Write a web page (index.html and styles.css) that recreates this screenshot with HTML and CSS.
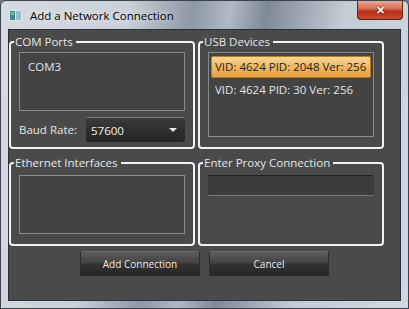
FILE: index.html
```html
<!DOCTYPE html>
<html lang="en">
<head>
  <meta charset="UTF-8" />
  <title>Add a Network Connection</title>
  <link rel="stylesheet" href="styles.css">
</head>
<body>

<div class="window">
  <!-- Title bar -->
  <div class="titlebar">
    <svg class="app-icon" width="13" height="11" viewBox="0 0 13 11">
      <rect x="0" y="0" width="13" height="11" fill="#dfe6ea"/>
      <rect x="1" y="1" width="5" height="9" fill="#3d8a8c"/>
      <rect x="7" y="1" width="5" height="9" fill="#9fb8c8"/>
      <rect x="2" y="2" width="3" height="3" fill="#6cc0b0"/>
    </svg>
    <span class="title">Add a Network Connection</span>
    <button class="close-btn">✕</button>
  </div>

  <!-- Client area -->
  <div class="client">
    <div class="groups">
      <fieldset class="group">
        <legend>COM Ports</legend>
        <ul class="listbox com-list">
          <li>COM3</li>
        </ul>
        <div class="baud-row">
          <label>Baud Rate:</label>
          <div class="combo">
            <span>57600</span>
            <span class="arrow"></span>
          </div>
        </div>
      </fieldset>

      <fieldset class="group">
        <legend>USB Devices</legend>
        <ul class="listbox usb-list">
          <li class="selected">VID: 4624 PID: 2048 Ver: 256</li>
          <li>VID: 4624 PID: 30 Ver: 256</li>
        </ul>
      </fieldset>

      <fieldset class="group">
        <legend>Ethernet Interfaces</legend>
        <ul class="listbox eth-list"></ul>
      </fieldset>

      <fieldset class="group">
        <legend>Enter Proxy Connection</legend>
        <input class="proxy-input" type="text" />
      </fieldset>
    </div>

    <div class="buttons">
      <button class="btn">Add Connection</button>
      <button class="btn">Cancel</button>
    </div>
  </div>
</div>

</body>
</html>
```

FILE: styles.css
```css
* { margin: 0; padding: 0; box-sizing: border-box; }

body {
  font-family: 'Open Sans', sans-serif;
  background: #6f7c88;
  width: 409px;
  height: 309px;
  overflow: hidden;
}

.window {
  width: 409px;
  height: 309px;
  border: 1px solid #3a4450;
  border-radius: 6px 6px 0 0;
  background: linear-gradient(100deg, #d6dbe0 0%, #c9d0d7 28%, #8c98a4 42%, #b0bac4 50%, #7e8a96 58%, #c4ccd4 75%, #d2d8de 100%);
  padding: 0 7px 7px 7px;
  display: flex;
  flex-direction: column;
}

/* Title bar */
.titlebar {
  height: 28px;
  display: flex;
  align-items: center;
  position: relative;
}

.app-icon {
  margin: 1px 0 0 1px;
}

.title {
  margin: 0 0 0 8px;
  font-size: 11.5px;
  color: #000;
  text-shadow: 0 0 6px rgba(255,255,255,0.9);
}

.close-btn {
  position: absolute;
  top: 0;
  right: -2px;
  width: 46px;
  height: 19px;
  border: 1px solid #5a2418;
  border-top: none;
  border-radius: 0 0 4px 4px;
  background: linear-gradient(#e8a896 0%, #d46a50 45%, #b8301c 55%, #c84a30 100%);
  color: #fff;
  font-size: 11px;
  font-weight: 700;
  text-shadow: 0 0 2px #400;
}

/* Client */
.client {
  flex: 1;
  background: #4a4a4a;
  border: 1px solid #26323e;
  padding: 5px 15px 0 0;
  display: flex;
  flex-direction: column;
}

.groups {
  display: grid;
  grid-template-columns: 186px 186px;
  grid-template-rows: 114px 90px;
  gap: 7px 3px;
}

.group {
  border: 2px solid #f2f2f2;
  border-radius: 4px;
  padding: 0 8px 8px 8px;
  min-width: 0;
}

.group legend {
  margin-left: -5px;
  padding: 0 3px 0 1px;
  font-size: 11.5px;
  line-height: 14px;
  color: #e6e6e6;
}

.listbox {
  list-style: none;
  background: #434343;
  border: 1px solid #8a8a8a;
  margin-top: 3px;
  padding: 3px 2px;
}

.com-list { height: 59px; }
.usb-list { height: 85px; }
.eth-list { height: 59px; margin-top: 5px; }

.listbox li {
  font-size: 11.5px;
  line-height: 18px;
  color: #e4e4e4;
  padding: 1px 5px;
  border: 1px solid transparent;
}

.usb-list li {
  padding: 1px 3px;
  margin-bottom: 1px;
}

.usb-list li.selected {
  background: linear-gradient(#f9d596 0%, #f0b862 50%, #e6a040 100%);
  border: 1px solid #b47c2c;
  border-radius: 2px;
  color: #1e1e1e;
}

.baud-row {
  display: flex;
  align-items: center;
  margin-top: 6px;
}

.baud-row label {
  font-size: 11.5px;
  color: #e4e4e4;
  width: 67px;
}

.combo {
  flex: 1;
  height: 25px;
  display: flex;
  align-items: center;
  justify-content: space-between;
  padding: 0 8px 0 5px;
  background: linear-gradient(#3a3a3a 0%, #2c2c2c 60%, #262626 100%);
  border-top: 1px solid #7a7a7a;
  border-radius: 2px;
  font-size: 11.5px;
  color: #f0f0f0;
}

.arrow {
  width: 0;
  height: 0;
  border-left: 4px solid transparent;
  border-right: 4px solid transparent;
  border-top: 4px solid #e8e8e8;
}

.proxy-input {
  display: block;
  width: 100%;
  height: 21px;
  margin-top: 5px;
  background: #3c3c3c;
  border: none;
  border-top: 1px solid #1e1e1e;
  border-bottom: 1px solid #7a7a7a;
  border-radius: 2px;
  outline: none;
}

/* Buttons */
.buttons {
  display: flex;
  justify-content: center;
  gap: 9px;
  margin-top: 5px;
  padding-left: 15px;
}

.btn {
  width: 120px;
  height: 25px;
  font-family: 'Open Sans', sans-serif;
  font-size: 10px;
  color: #ececec;
  background: linear-gradient(#5c5c5c 0%, #444 45%, #303030 55%, #282828 100%);
  border: 1px solid #2a2a2a;
  border-top-color: #6a6a6a;
  border-radius: 2px;
  cursor: pointer;
}
```
